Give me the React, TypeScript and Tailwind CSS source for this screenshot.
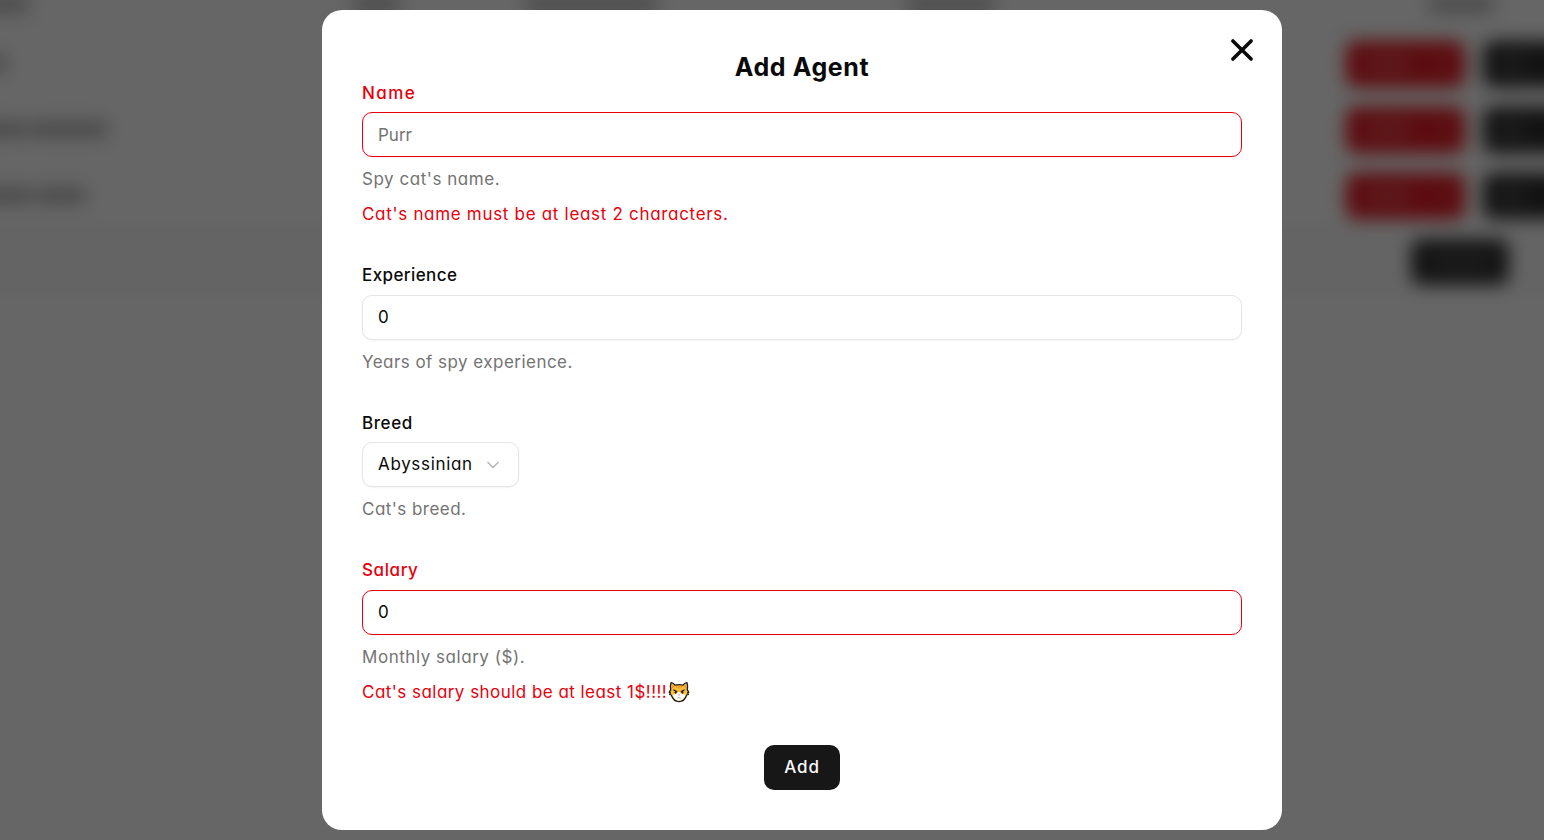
import type { ReactNode } from "react";

function Smudge({ className }: { className: string }) {
  return <span className={`block h-[15px] shrink-0 rounded bg-black/30 ${className}`} />;
}

function RowActions() {
  return (
    <div className="ml-auto flex shrink-0 gap-[18px]">
      <div className="flex h-[46px] w-[119px] items-center rounded-[10px] bg-[#e61a23] pl-[18px]">
        <span className="h-4 w-12 rounded bg-white/20" />
        <span className="ml-[22px] h-4 w-4 rounded bg-white/10" />
      </div>
      <div className="flex h-[46px] w-[101px] items-center rounded-l-[10px] bg-[#303030]">
        <span className="ml-4 h-4 w-6 rounded bg-white/15" />
      </div>
    </div>
  );
}

function AgentTable() {
  return (
    <div className="absolute -inset-[40px] overflow-hidden bg-white blur-[9px]">
      <div className="flex h-[71px] items-start border-b border-neutral-200 pt-[37px]">
        <Smudge className="w-[69px]" />
        <Smudge className="ml-[324px] w-[47px]" />
        <Smudge className="ml-[125px] w-[133px]" />
        <Smudge className="ml-[249px] w-[88px]" />
        <Smudge className="ml-[434px] w-[65px]" />
      </div>
      <div className="flex h-[66px] items-center border-b border-neutral-200">
        <Smudge className="w-[47px]" />
        <RowActions />
      </div>
      <div className="flex h-[66px] items-center border-b border-neutral-200">
        <Smudge className="w-[66px]" />
        <Smudge className="ml-[3px] w-[79px]" />
        <RowActions />
      </div>
      <div className="flex h-[66px] items-center border-b border-neutral-200">
        <Smudge className="w-[73px]" />
        <Smudge className="ml-[4px] w-[49px]" />
        <RowActions />
      </div>
      <div className="flex h-[66px] items-center justify-end bg-neutral-50 pr-[75px]">
        <div className="flex h-[46px] w-[98px] items-center justify-center rounded-[10px] bg-[#323232]">
          <span className="h-4 w-14 rounded bg-white/10" />
        </div>
      </div>
    </div>
  );
}

function CatFace() {
  return (
    <svg viewBox="0 0 22 22" className="-mt-[2px] ml-[1px] h-[22px] w-[22px] shrink-0" aria-hidden="true">
      <path
        d="M3 1.600C4.600 1.500 6 2.900 7.200 4.200c2.400-.7 5.200-.7 7.600 0C16 2.900 17.400 1.500 19 1.600c.7 2 .6 5 .3 7.200l1.500 2.400-1.100.5.700 1.800-1.700.5C17.400 18 14.700 20.600 11 20.600S4.600 18 3.300 14l-1.700-.5.700-1.800-1.100-.5 1.500-2.400C2.400 6.600 2.300 3.600 3 1.600z"
        fill="#fbbd3a"
        stroke="#1b1a17"
        strokeWidth="1.300"
        strokeLinejoin="round"
      />
      <path d="M11 10.800c1 1.400 3.800 2.400 6.600 3-1.300 3.700-3.700 6-6.600 6s-5.300-2.300-6.600-6c2.800-.6 5.600-1.600 6.600-3z" fill="#fff" />
      <path d="M3.800 3.400l2.600 2.200-2.300 2zM18.200 3.400l-2.600 2.200 2.300 2z" fill="#ee9a2d" />
      <path d="M8.800 4.800v2M11 4.600v2.800M13.200 4.800v2" stroke="#e8871a" strokeWidth="1" />
      <path d="M5.800 8.900l3 1.700M16.200 8.900l-3 1.700" stroke="#1b1a17" strokeWidth="1.100" strokeLinecap="round" />
      <ellipse cx="7.600" cy="11.300" rx="1" ry="1.400" fill="#1b1a17" />
      <ellipse cx="14.400" cy="11.300" rx="1" ry="1.400" fill="#1b1a17" />
      <path d="M9.800 13.400h2.400L11 14.800z" fill="#f0625c" />
      <path d="M9.200 17.300c.8-1.200 2.800-1.200 3.600 0" fill="none" stroke="#b0b0b0" strokeWidth=".9" strokeLinecap="round" />
    </svg>
  );
}

function Label({ children, className }: { children: ReactNode; className: string }) {
  return <label className={`block font-medium leading-[17px] ${className}`}>{children}</label>;
}

function Hint({ children, className }: { children: ReactNode; className: string }) {
  return <p className={`h-[25px] leading-[25px] text-[#737373] ${className}`}>{children}</p>;
}

const inputBase =
  "block h-[45px] w-full rounded-[10px] border bg-white px-[15px] leading-[25px] shadow-xs outline-none placeholder:text-[#737373]";

export default function App() {
  return (
    <div className="relative h-[840px] w-full overflow-hidden font-['Inter',sans-serif] text-[17px] text-[#0a0a0a] [font-feature-settings:'cv11']">
      <AgentTable />
      <div className="absolute inset-0 flex items-center justify-center bg-black/60 pl-[60px]">
        <div className="relative h-[820px] w-[960px] rounded-[20px] bg-white p-[40px]">
          <button className="absolute right-[25px] top-[25px] flex h-[30px] w-[30px] items-center justify-center" aria-label="Close">
            <svg viewBox="0 0 30 30" className="h-[30px] w-[30px]" fill="none" stroke="#0a0a0a" strokeWidth="3.600" strokeLinecap="round">
              <path d="M5.900 5.900l18.200 18.200M24.100 5.900L5.900 24.100" />
            </svg>
          </button>
          <h2 className="h-[35px] text-center text-[25px] font-bold leading-[35px] tracking-[0.600px]">Add Agent</h2>
          <form className="flex flex-col gap-[40px]" onSubmit={(e) => e.preventDefault()}>
            <div className="flex flex-col gap-[10px]">
              <Label className="h-[17px] tracking-[1.400px] text-[#e7000b]">Name</Label>
              <input className={`${inputBase} border-[#e7000b] pt-[1px]`} placeholder="Purr" />
              <Hint className="tracking-[0.540px]">Spy cat's name.</Hint>
              <p className="h-[25px] leading-[25px] tracking-[0.690px] text-[#e7000b]">Cat's name must be at least 2 characters.</p>
            </div>
            <div className="flex flex-col gap-[10px]">
              <Label className="h-[18px] tracking-[0.400px]">Experience</Label>
              <input className={`${inputBase} border-[#e5e5e5] pb-[1px]`} defaultValue="0" />
              <Hint className="tracking-[0.460px]">Years of spy experience.</Hint>
            </div>
            <div className="flex flex-col gap-[10px]">
              <Label className="h-[17px] tracking-[0.600px]">Breed</Label>
              <button className="flex h-[45px] w-[157px] items-center justify-between rounded-[10px] border border-[#e5e5e5] bg-white pb-[1px] pl-[15px] pr-[15px] leading-[25px] shadow-xs">
                <span className="tracking-[0.670px]">Abyssinian</span>
                <svg viewBox="0 0 24 24" className="mt-[2px] h-5 w-5 opacity-50" fill="none" stroke="#737373" strokeWidth="2" strokeLinecap="round" strokeLinejoin="round">
                  <path d="m6 9 6 6 6-6" />
                </svg>
              </button>
              <Hint className="tracking-[0.460px]">Cat's breed.</Hint>
            </div>
            <div className="flex flex-col gap-[10px]">
              <Label className="h-[18px] tracking-[0.600px] text-[#e7000b]">Salary</Label>
              <input className={`${inputBase} border-[#e7000b] pb-[1px]`} defaultValue="0" />
              <Hint className="tracking-[0.540px]">Monthly salary ($).</Hint>
              <p className="flex h-[25px] items-center leading-[25px] tracking-[0.460px] text-[#e7000b]">
                Cat's salary should be at least 1$!!!!
                <CatFace />
              </p>
            </div>
            <button className="h-[45px] w-[76px] self-center rounded-[10px] bg-[#171717] pt-[1px] font-medium tracking-[0.900px] text-[#fafafa]">
              Add
            </button>
          </form>
        </div>
      </div>
    </div>
  );
}
